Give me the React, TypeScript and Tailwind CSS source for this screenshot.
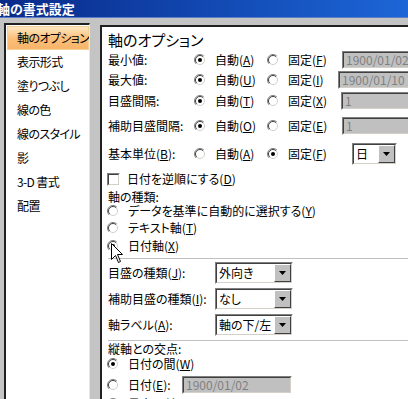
import React from 'react';

const font = "font-['Noto_Sans_CJK_JP',sans-serif] [font-feature-settings:'palt']";

function Radio({ checked = false }: { checked?: boolean }) {
	return (
		<svg width="12" height="12" viewBox="0 0 12 12" className="shrink-0">
			<circle cx="6" cy="6" r="5" fill="#fff" />
			<path d="M2.1 9.9 A5.5 5.5 0 0 1 9.9 2.1" fill="none" stroke="#808080" strokeWidth="1" />
			<path d="M2.8 9.2 A4.5 4.5 0 0 1 9.2 2.8" fill="none" stroke="#404040" strokeWidth="1" />
			<path d="M9.9 2.1 A5.5 5.5 0 0 1 2.1 9.9" fill="none" stroke="#ffffff" strokeWidth="1" />
			<path d="M9.2 2.8 A4.5 4.5 0 0 1 2.8 9.2" fill="none" stroke="#d4d0c8" strokeWidth="1" />
			{checked && <circle cx="6" cy="6" r="2" fill="#000" />}
		</svg>
	);
}

function TextBox({ value, className = '' }: { value: string; className?: string }) {
	return (
		<div className={`h-[18px] border border-t-[#808080] border-l-[#808080] border-r-white border-b-white ${className}`}>
			<div className="flex h-full items-center whitespace-nowrap border border-t-[#404040] border-l-[#404040] border-r-[#d4d0c8] border-b-[#d4d0c8] bg-[#c0c0c0] pl-[2px] text-[12px] leading-[14px] text-[#808080]">
				{value}
			</div>
		</div>
	);
}

function Select({ value, className = '' }: { value: string; className?: string }) {
	return (
		<div className={`h-[22px] border border-t-[#808080] border-l-[#808080] border-r-white border-b-white ${className}`}>
			<div className="flex h-full items-center border border-t-[#404040] border-l-[#404040] border-r-[#d4d0c8] border-b-[#d4d0c8] bg-white">
				<span className="flex-1 whitespace-nowrap pl-[2px] text-[12px] leading-[14px]">{value}</span>
				<div className="flex h-full w-[17px] shrink-0 items-center justify-center border border-t-white border-l-white border-r-[#404040] border-b-[#404040] bg-[#c0c0c0]">
					<svg width="7" height="4" viewBox="0 0 7 4">
						<path d="M0 0 H7 L3.5 4 Z" fill="#000" />
					</svg>
				</div>
			</div>
		</div>
	);
}

function CheckBox() {
	return (
		<div className="h-[13px] w-[13px] shrink-0 border border-t-[#808080] border-l-[#808080] border-r-white border-b-white">
			<div className="h-full w-full border border-t-[#404040] border-l-[#404040] border-r-[#d4d0c8] border-b-[#d4d0c8] bg-white" />
		</div>
	);
}

const navs = ['軸のオプション', '表示形式', '塗りつぶし', '線の色', '線のスタイル', '影', '3-D 書式', '配置'];

const bounds = [
	{ label: '最小値:', auto: 'A', fixed: 'F', value: '1900/01/02', mt: 'mt-0', ml: 'ml-0' },
	{ label: '最大値:', auto: 'U', fixed: 'I', value: '1900/01/10', mt: 'mt-[2px]', ml: 'ml-[-4px]' },
	{ label: '目盛間隔:', auto: 'T', fixed: 'X', value: '1', mt: 'mt-[3px]', ml: 'ml-[-1px]' },
	{ label: '補助目盛間隔:', auto: 'O', fixed: 'E', value: '1', mt: 'mt-[7px]', ml: 'ml-0' },
];

export default function App() {
	return (
		<div className={`relative h-[399px] w-[408px] overflow-hidden bg-[#c4c4c4] text-black ${font}`}>
			<div className="flex h-[18px] items-center border-b border-[#5a7fc8] bg-gradient-to-r from-[#0a2a8a] to-[#1d66d8]">
				<span className="ml-[-3px] whitespace-nowrap text-[13px] font-bold leading-[16px] text-white">軸の書式設定</span>
			</div>

			<div className="flex items-start">
				{/* category list */}
				<div className="ml-[4px] mt-[5px] h-[400px] w-[86px] shrink-0 overflow-hidden border-l-2 border-t-2 border-r border-l-[#202020] border-t-[#202020] border-r-[#e6e6e6] bg-white pt-[1px]">
					{navs.map((item, i) => (
						<div
							key={item}
							className={
								i === 0
									? 'ml-[1px] flex h-[24px] items-center whitespace-nowrap border border-[#f3cf98] bg-gradient-to-b from-[#fde8c2] via-[#fbc07a] to-[#f7b46a] pl-[9px] text-[12px] leading-[14px] tracking-[-0.6px]'
									: 'flex h-[24px] items-center whitespace-nowrap pl-[11px] text-[12px] leading-[14px] tracking-[-0.6px]'
							}
						>
							{item}
						</div>
					))}
				</div>

				{/* option panel */}
				<div className="ml-[10px] mt-[7px] h-[400px] w-[330px] shrink-0 whitespace-nowrap border-l-2 border-t-2 border-l-[#202020] border-t-[#202020] bg-white pl-[6px] text-[12px] leading-[14px]">
					<div className="mt-[2px] flex h-[22px] items-center text-[15px] leading-[18px]">軸のオプション</div>

					{bounds.map((row) => (
						<div key={row.label} className={`flex h-[18px] items-center ${row.mt}`}>
							<span className="w-[86px] shrink-0">{row.label}</span>
							<div className="flex w-[73px] shrink-0 items-center">
								<Radio checked />
								<span className="ml-[9px]">自動(<u>{row.auto}</u>)</span>
							</div>
							<div className="flex w-[75px] shrink-0 items-center">
								<Radio />
								<span className="ml-[9px]">固定(<u>{row.fixed}</u>)</span>
							</div>
							<TextBox value={row.value} className={`w-[90px] shrink-0 ${row.ml}`} />
						</div>
					))}

					<div className="mt-[8px] flex h-[22px] items-center">
						<span className="w-[86px] shrink-0">基本単位(<u>B</u>):</span>
						<div className="flex w-[73px] shrink-0 items-center">
							<Radio />
							<span className="ml-[9px]">自動(<u>A</u>)</span>
						</div>
						<div className="flex w-[75px] shrink-0 items-center">
							<Radio checked />
							<span className="ml-[9px]">固定(<u>F</u>)</span>
						</div>
						<Select value="日" className="ml-[10px] w-[45px] shrink-0" />
					</div>

					<div className="ml-[-1px] mt-[7px] flex h-[14px] items-center">
						<CheckBox />
						<span className="ml-[7px]">日付を逆順にする(<u>D</u>)</span>
					</div>

					<div className="mt-[4px] flex h-[14px] items-center leading-[12px]">軸の種類:</div>
					<div className="ml-[-1px] flex h-[14px] items-center leading-[12px]">
						<Radio />
						<span className="ml-[9px]">データを基準に自動的に選択する(<u>Y</u>)</span>
					</div>
					<div className="ml-[-1px] mt-[3px] flex h-[14px] items-center">
						<Radio />
						<span className="ml-[9px]">テキスト軸(<u>T</u>)</span>
					</div>
					<div className="ml-[-1px] mt-[4px] flex h-[14px] items-center">
						<Radio checked />
						<span className="ml-[9px]">日付軸(<u>X</u>)</span>
					</div>

					<div className="mt-[5px] h-px bg-[#c0c0c0]" />

					<div className="mt-[3px] flex h-[22px] items-center">
						<span className="w-[107px] shrink-0">目盛の種類(<u>J</u>):</span>
						<Select value="外向き" className="w-[78px] shrink-0" />
					</div>
					<div className="mt-[4px] flex h-[22px] items-center">
						<span className="w-[107px] shrink-0">補助目盛の種類(<u>I</u>):</span>
						<Select value="なし" className="w-[78px] shrink-0" />
					</div>
					<div className="mt-[4px] flex h-[22px] items-center">
						<span className="w-[107px] shrink-0">軸ラベル(<u>A</u>):</span>
						<Select value="軸の下/左" className="w-[78px] shrink-0" />
					</div>

					<div className="mt-[4px] h-px bg-[#c0c0c0]" />

					<div className="mt-[1px] flex h-[14px] items-center leading-[12px]">縦軸との交点:</div>
					<div className="ml-[-1px] mt-[1px] flex h-[14px] items-center leading-[12px]">
						<Radio checked />
						<span className="ml-[9px]">日付の間(<u>W</u>)</span>
					</div>
					<div className="ml-[-1px] mt-[5px] flex h-[18px] items-center">
						<Radio />
						<span className="ml-[9px] w-[54px] shrink-0">日付(<u>E</u>):</span>
						<TextBox value="1900/01/02" className="w-[110px] shrink-0" />
					</div>
					<div className="ml-[-1px] mt-[3px] flex h-[14px] items-center">
						<Radio />
						<span className="ml-[9px]">最大日付(<u>M</u>)</span>
					</div>
				</div>
			</div>

			{/* mouse pointer */}
			<svg className="absolute left-[111px] top-[243px]" width="13" height="21" viewBox="0 0 13 21">
				<path d="M0.5 0.5 V16.5 L4.5 12.5 L7.5 19.5 L9.5 18.5 L6.5 11.5 H11.5 Z" fill="#fff" stroke="#000" strokeWidth="1" />
			</svg>
		</div>
	);
}
